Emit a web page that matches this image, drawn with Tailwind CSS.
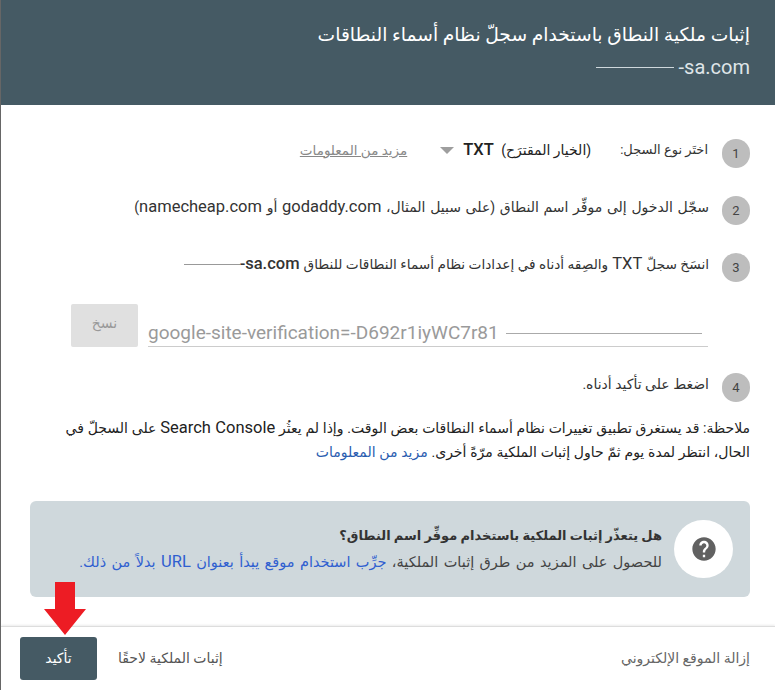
<!DOCTYPE html>
<html lang="ar" dir="rtl">
<head>
<meta charset="utf-8">
<script src="https://cdn.jsdelivr.net/npm/@tailwindcss/browser@4"></script>
</head>
<body class="bg-white">
<div class="relative w-[775px] h-[690px] overflow-hidden border-l border-l-[#666] font-['Roboto','DejaVu_Sans',sans-serif] text-[#333] flex flex-col">
  <header class="h-[105px] shrink-0 bg-[#455a64] text-white pr-[25px] pt-[23px]">
    <h1 class="text-[18.7px] leading-[24px] font-normal whitespace-nowrap">إثبات ملكية النطاق باستخدام سجلّ نظام أسماء النطاقات</h1>
    <div class="mt-[7px] h-[26px] flex items-center text-[20px] text-[#dfe5e8]" dir="ltr"><div class="ml-auto flex items-center"><span class="w-[78px] h-px bg-[#cfd8dc]"></span><span class="ml-[5px]">-sa.com</span></div></div>
  </header>

  <main class="flex-1 flex flex-col pr-[25px] pl-[24px]">
    <div class="mt-[34px] h-[29px] flex items-center">
      <span class="w-[28px] h-[29px] rounded-full bg-[#bdbdbd] shrink-0 flex items-center justify-center text-[13px] text-[#444] ml-[14px]">1</span>
      <span class="text-[13px] -mt-[7px] whitespace-nowrap">اختَر نوع السجل:</span>
      <span class="text-[14px] -mt-[7px] mr-[29px] whitespace-nowrap text-[#222]">(الخيار المقترَح) <span class="text-[16.5px] font-medium mr-[4px]">TXT</span></span>
      <span class="-mt-[7px] mr-[9px] w-0 h-0 border-x-[7px] border-x-transparent border-t-[7px] border-t-[#9e9e9e]"></span>
      <span class="text-[13.5px] -mt-[7px] mr-[33px] whitespace-nowrap text-[#888] underline">مزيد من المعلومات</span>
    </div>

    <div class="mt-[28px] h-[29px] flex items-center gap-[13px]">
      <span class="w-[28px] h-[29px] rounded-full bg-[#bdbdbd] shrink-0 flex items-center justify-center text-[13px] text-[#444]">2</span>
      <span class="text-[14px] -mt-[6px] whitespace-nowrap [word-spacing:1.2px]">سجّل الدخول إلى موفِّر اسم النطاق (على سبيل المثال، <span class="text-[16.5px]">godaddy.com</span> أو <span class="text-[16.5px]">namecheap.com</span>)</span>
    </div>

    <div class="mt-[28px] h-[29px] flex items-center gap-[13px]">
      <span class="w-[28px] h-[29px] rounded-full bg-[#bdbdbd] shrink-0 flex items-center justify-center text-[13px] text-[#444]">3</span>
      <span class="text-[13.7px] -mt-[7px] whitespace-nowrap flex items-center">انسَخ سجلّ <span class="text-[16.5px] mx-1">TXT</span> والصِقه أدناه في إعدادات نظام أسماء النطاقات للنطاق
        <span class="flex items-center mr-1 font-medium text-[16.5px]" dir="ltr"><span class="w-[56px] h-px bg-[#999]"></span>-sa.com</span></span>
    </div>

    <div class="mt-[22px] h-[43px] mr-[42px] ml-[46px] flex gap-[10px] items-stretch">
      <div class="flex-1 border-b border-b-[#ccc] flex items-center pt-[16px] pr-[6px] text-[19px] text-[#9a9a9a]" dir="ltr">
        <div class="w-full flex items-center gap-[7px]"><span class="whitespace-nowrap">google-site-verification=-D692r1iyWC7r81</span><span class="flex-1 h-px bg-[#aaa]"></span></div>
      </div>
      <button class="w-[67px] bg-[#e0e0e0] rounded-[2px] text-[14px] text-[#999] pb-[4px]">نسخ</button>
    </div>

    <div class="mt-[26px] h-[29px] flex items-center gap-[13px]">
      <span class="w-[28px] h-[29px] rounded-full bg-[#bdbdbd] shrink-0 flex items-center justify-center text-[13px] text-[#444]">4</span>
      <span class="text-[14px] -mt-[7px]">اضغط على تأكيد أدناه.</span>
    </div>

    <p class="mt-[14px] -ml-[3px] text-[14px] leading-[24px] text-[#222] whitespace-nowrap [word-spacing:0.3px]">ملاحظة: قد يستغرق تطبيق تغييرات نظام أسماء النطاقات بعض الوقت. وإذا لم يعثُر <span class="text-[16.5px]">Search Console</span> على السجلّ في<br>الحال، انتظر لمدة يوم ثمّ حاول إثبات الملكية مرّةً أخرى. <a class="text-[#2a5db0]">مزيد من المعلومات</a></p>

    <section class="mt-[37px] h-[96px] ml-[5px] bg-[#cfd8dc] rounded-[6px] flex items-center pr-[17px] gap-[12px]">
      <div class="w-[59px] h-[58px] rounded-full bg-white shrink-0 flex items-center justify-center">
        <svg viewBox="0 0 24 24" class="w-[28px] h-[28px]" fill="#616161"><path d="M12 2C6.48 2 2 6.48 2 12s4.48 10 10 10 10-4.48 10-10S17.52 2 12 2zm1 17h-2v-2h2v2zm2.07-7.75l-.9.92C13.45 12.9 13 13.5 13 15h-2v-.5c0-1.1.45-2.1 1.17-2.83l1.24-1.26c.37-.36.59-.86.59-1.41 0-1.1-.9-2-2-2s-2 .9-2 2H8c0-2.21 1.79-4 4-4s4 1.79 4 4c0 .88-.36 1.68-.93 2.25z"/></svg>
      </div>
      <div class="leading-[26px] whitespace-nowrap">
        <div class="text-[13px] font-bold text-[#333]">هل يتعذّر إثبات الملكية باستخدام موفِّر اسم النطاق؟</div>
        <div class="text-[14.5px] text-[#444] [word-spacing:1.8px]">للحصول على المزيد من طرق إثبات الملكية، <a class="text-[#2f5fd0]">جرِّب استخدام موقع يبدأ بعنوان <span class="text-[16.5px]">URL</span> بدلاً من ذلك.</a></div>
      </div>
    </section>
  </main>

  <footer class="h-[64px] shrink-0 border-t border-t-[#ddd] shadow-[0_-1px_2px_rgba(0,0,0,0.08)] flex items-center pr-[25px] pl-[19px] text-[14px] text-[#666]">
    <span>إزالة الموقع الإلكتروني</span>
    <span class="mr-auto text-[#555]">إثبات الملكية لاحقًا</span>
    <button class="mr-[21px] w-[77px] h-[43px] bg-[#455a64] rounded-[3px] text-white text-[14px] font-medium">تأكيد</button>
  </footer>

  <svg class="absolute left-[43px] top-[582px] w-[42px] h-[53px]" viewBox="0 0 42 53"><path fill="#ed1c24" d="M11 0h20v27h11L21 53 0 27h11z"/></svg>
</div>
</body>
</html>
